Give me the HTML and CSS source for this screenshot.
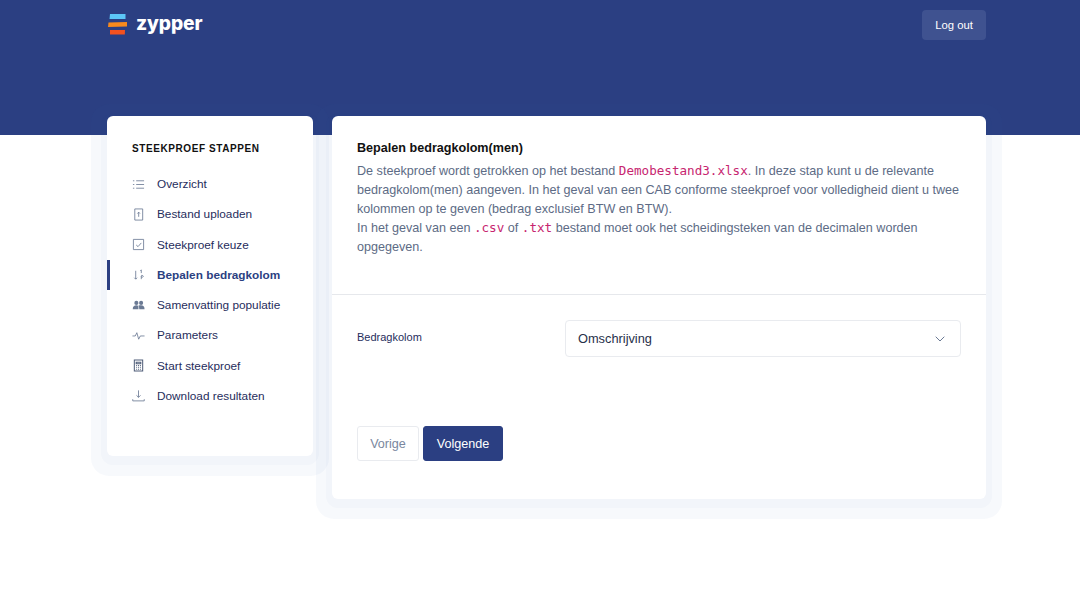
FILE: index.html
```html
<!DOCTYPE html>
<html lang="nl">
<head>
<meta charset="utf-8">
<title>Zypper</title>
<link rel="stylesheet" href="styles.css">
</head>
<body>
<header class="topbar">
  <div class="topbar-inner">
    <div class="brand">
      <svg class="brand-mark" width="19" height="22" viewBox="0 0 19 22">
        <path d="M2 1h15.500v5H1.500z" fill="#5cc6f7"/>
        <path d="M.5 9.500L19 9v4.500L0 14z" fill="#f78a1d"/>
        <path d="M2 17h15l-.2 4.500H2z" fill="#f4511e"/>
      </svg>
      <span class="brand-name">zypper</span>
    </div>
    <a class="logout">Log out</a>
  </div>
</header>
<div class="layout">
  <aside class="card sidebar">
    <h2 class="side-title">STEEKPROEF STAPPEN</h2>
    <ul class="steps">
      <li class="step"><svg class="ico" viewBox="0 0 14 14"><path d="M4.500 3h8.500M4.500 7h8.500M4.500 11h8.500M1 3h1.500M1 7h1.500M1 11h1.500"/></svg>Overzicht</li>
      <li class="step"><svg class="ico" viewBox="0 0 14 14"><path d="M3 1h8.500v12H3zM7.200 9.500v-5M5.800 6l1.400-1.500L8.600 6"/></svg>Bestand uploaden</li>
      <li class="step"><svg class="ico" viewBox="0 0 14 14"><path d="M1.500 1.500h11v11h-11zM4.500 7.500l2 1.800 3.500-4"/></svg>Steekproef keuze</li>
      <li class="step active"><svg class="ico" viewBox="0 0 14 14"><path d="M4 3v9M2.500 10.500L4 12l1.500-1.500M10 2v3.500M9 3l1-1M10 9a1 1 0 1 0 0-.1V12"/></svg>Bepalen bedragkolom</li>
      <li class="step"><svg class="ico solid" viewBox="0 0 14 14"><circle cx="4.700" cy="4.200" r="2.200"/><circle cx="9.800" cy="4.200" r="2.200"/><path d="M.8 11c0-3 1.600-4.200 3.900-4.200S7 8 7 11zM7.800 11c0-1.600-.3-3-1-3.700.8-.4 1.800-.5 3-.5 2.300 0 3.700 1.200 3.700 4.200z"/></svg>Samenvatting populatie</li>
      <li class="step"><svg class="ico" viewBox="0 0 14 14"><path d="M.5 7.500h3L5.200 4l2 7 1.800-3.500h4.500"/></svg>Parameters</li>
      <li class="step"><svg class="ico dark" viewBox="0 0 14 14"><path d="M2.500 1h9v12h-9zM4.500 3.500h5v1.500h-5zM4.500 7h1M6.500 7h1M8.500 7h1M4.500 9h1M6.500 9h1M8.500 9h1M4.500 11h1M6.500 11h1M8.500 11h1"/></svg>Start steekproef</li>
      <li class="step"><svg class="ico" viewBox="0 0 14 14"><path d="M7 1.500v7.500M4.800 6.800L7 9l2.200-2.200M.8 11v1.800h12.400V11"/></svg>Download resultaten</li>
    </ul>
  </aside>
  <main class="card content">
    <section class="intro">
      <h1 class="heading">Bepalen bedragkolom(men)</h1>
      <p class="lead">De steekproef wordt getrokken op het bestand <code>Demobestand3.xlsx</code>. In deze stap kunt u de relevante bedragkolom(men) aangeven. In het geval van een CAB conforme steekproef voor volledigheid dient u twee kolommen op te geven (bedrag exclusief BTW en BTW).<br>In het geval van een <code>.csv</code> of <code>.txt</code> bestand moet ook het scheidingsteken van de decimalen worden opgegeven.</p>
    </section>
    <section class="form">
      <div class="field">
        <label class="field-label">Bedragkolom</label>
        <div class="select">
          <span>Omschrijving</span>
          <svg class="chevron" width="10" height="6" viewBox="0 0 10 6"><path d="M.7.7L5 5l4.300-4.300"/></svg>
        </div>
      </div>
      <div class="actions">
        <button class="btn btn-ghost">Vorige</button>
        <button class="btn btn-primary">Volgende</button>
      </div>
    </section>
  </main>
</div>
</body>
</html>
```
FILE: styles.css
```css
* { box-sizing: border-box; }
html, body { margin: 0; padding: 0; }
body {
  background: #fff;
  font-family: "Liberation Sans", Arial, sans-serif;
  color: #1f2d5c;
  overflow: hidden;
  height: 608px;
}
.topbar { background: #2b3f82; height: 135px; }
.topbar-inner {
  width: 879px;
  margin-left: 107px;
  padding-top: 10px;
  display: flex;
  justify-content: space-between;
  align-items: flex-start;
}
.brand { display: flex; align-items: center; gap: 9px; margin-top: 3px; padding-left: 1px; }
.brand-mark { display: block; }
.brand-name {
  color: #fff;
  font-family: Inter, sans-serif;
  font-weight: 800;
  font-size: 19.2px;
  line-height: 24px;
  margin-top: -2px;
  letter-spacing: -.1px;
}
.logout {
  width: 64px;
  height: 30px;
  border-radius: 4px;
  background: #3f5290;
  color: #fff;
  font-size: 11.3px;
  line-height: 30px;
  text-align: center;
}
.layout {
  width: 879px;
  margin: -19px 0 0 107px;
  display: flex;
  gap: 19px;
  align-items: flex-start;
}
.card {
  background: #fff;
  border-radius: 6px;
  box-shadow: 0 3px 0 6px rgba(55, 105, 188, .022), 0 4px 0 16px rgba(55, 105, 188, .04);
}
.sidebar { width: 206px; height: 340px; padding-top: 26px; }
.side-title {
  margin: 0 0 14px 25px;
  font-size: 10px;
  line-height: 13px;
  font-weight: 700;
  letter-spacing: .58px;
  color: #111;
}
.steps { list-style: none; margin: 0; padding: 0; }
.step {
  height: 30.25px;
  display: flex;
  align-items: center;
  font-size: 11.8px;
  color: #1f2d5c;
  border-left: 3px solid transparent;
  padding-left: 22px;
}
.step.active { border-left-color: #2b3f82; color: #2b3f82; font-weight: 700; }
.ico {
  width: 13px;
  height: 13px;
  margin-right: 12px;
  flex: none;
  fill: none;
  stroke: #6b7a94;
  stroke-width: .9;
}
.ico.solid { fill: #6b7a94; stroke: none; }
.ico.dark { stroke: #4f5d78; stroke-width: 1.1; }
.content { width: 654px; height: 383px; }
.intro {
  height: 179px;
  padding: 24px 25px 0;
  border-bottom: 1px solid #e6e8ec;
}
.heading {
  margin: 0 0 5px;
  font-size: 12.6px;
  line-height: 17px;
  font-weight: 700;
  color: #111;
}
.lead {
  margin: 0;
  font-size: 12.6px;
  line-height: 19px;
  color: #5d6b85;
}
code {
  font-family: "DejaVu Sans Mono", monospace;
  font-size: 12.6px;
  line-height: 1;
  color: #c7256f;
}
.form { padding: 25px 25px 0; }
.field { display: flex; align-items: center; justify-content: space-between; }
.field-label { font-size: 11px; line-height: 13px; margin-top: -3px; color: #1f2d5c; }
.select {
  width: 396px;
  height: 37px;
  padding: 0 15px 0 12px;
  border: 1px solid #e9ebef;
  border-radius: 4px;
  display: flex;
  align-items: center;
  justify-content: space-between;
  font-size: 12.8px;
  color: #27304a;
}
.chevron { fill: none; stroke: #6b7a94; stroke-width: 1; }
.actions { margin-top: 69px; display: flex; gap: 4px; }
.btn {
  height: 35px;
  border-radius: 3px;
  font-family: inherit;
  font-size: 12.6px;
  padding: 0;
}
.btn-ghost { width: 62px; background: #fff; border: 1px solid #e9ebef; color: #7a879e; }
.btn-primary { width: 80px; background: #2b3f82; border: 1px solid #2b3f82; color: #fff; }
```
